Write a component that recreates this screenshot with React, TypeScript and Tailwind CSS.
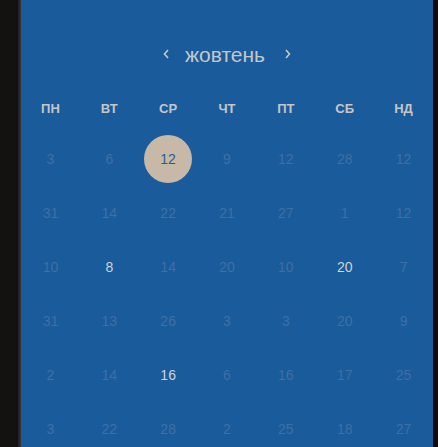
import React from "react";

const rows: number[][] = [
  [3, 6, 12, 9, 12, 28, 12],
  [31, 14, 22, 21, 27, 1, 12],
  [10, 8, 14, 20, 10, 20, 7],
  [31, 13, 26, 3, 3, 20, 9],
  [2, 14, 16, 6, 16, 17, 25],
  [3, 22, 28, 2, 25, 18, 27],
];

const bright = new Set(["2-1", "2-5", "4-2"]);
const days = ["ПН", "ВТ", "СР", "ЧТ", "ПТ", "СБ", "НД"];

export default function App() {
  return (
    <div
      className="w-[438px] h-[447px] bg-[#141210] flex overflow-hidden"
      style={{ fontFamily: '"Liberation Sans", Arial, sans-serif' }}
    >
      <div className="w-[18px] shrink-0" />
      <div className="w-[3px] shrink-0 bg-gradient-to-r from-[#1c1b1a] to-[#3a3a3a]" />
      <div className="w-[412px] shrink-0 h-full bg-[#1a5b9b] flex flex-col overflow-hidden">
        <div className="shrink-0 mt-[40px] h-[28px] flex items-center justify-center">
          <svg width="8" height="12" viewBox="0 0 8 12" className="mr-[15px]">
            <path d="M6 2 L2.5 6 L6 10" fill="none" stroke="#c3c7cc" strokeWidth="1.6" />
          </svg>
          <span className="text-[21px] text-[#c3c7cc] leading-none">жовтень</span>
          <svg width="8" height="12" viewBox="0 0 8 12" className="ml-[19px]">
            <path d="M2 2 L5.5 6 L2 10" fill="none" stroke="#c3c7cc" strokeWidth="1.6" />
          </svg>
        </div>
        <div className="shrink-0 mt-[21px] h-[43px] grid grid-cols-7 items-start">
          {days.map((d) => (
            <div key={d} className="text-center text-[13px] font-bold text-[#c5c6c8] leading-[40px]">
              {d}
            </div>
          ))}
        </div>
        <div className="shrink-0 flex flex-col">
          {rows.map((r, ri) => (
            <div key={ri} className="shrink-0 h-[54px] grid grid-cols-7 items-center">
              {r.map((n, ci) => {
                const sel = ri === 0 && ci === 2;
                const br = bright.has(`${ri}-${ci}`);
                return (
                  <div key={ci} className="flex items-center justify-center">
                    {sel ? (
                      <div className="w-[48px] h-[48px] rounded-full bg-[#c8b8a7] flex items-center justify-center text-[14px] text-[#1f5f9c]">
                        {n}
                      </div>
                    ) : (
                      <span
                        className={
                          "text-[14px] " + (br ? "text-[#cfd2d6]" : "text-[#3f6fa5]")
                        }
                      >
                        {n}
                      </span>
                    )}
                  </div>
                );
              })}
            </div>
          ))}
        </div>
      </div>
      <div className="flex-1 bg-[#0e0d0c]" />
    </div>
  );
}
